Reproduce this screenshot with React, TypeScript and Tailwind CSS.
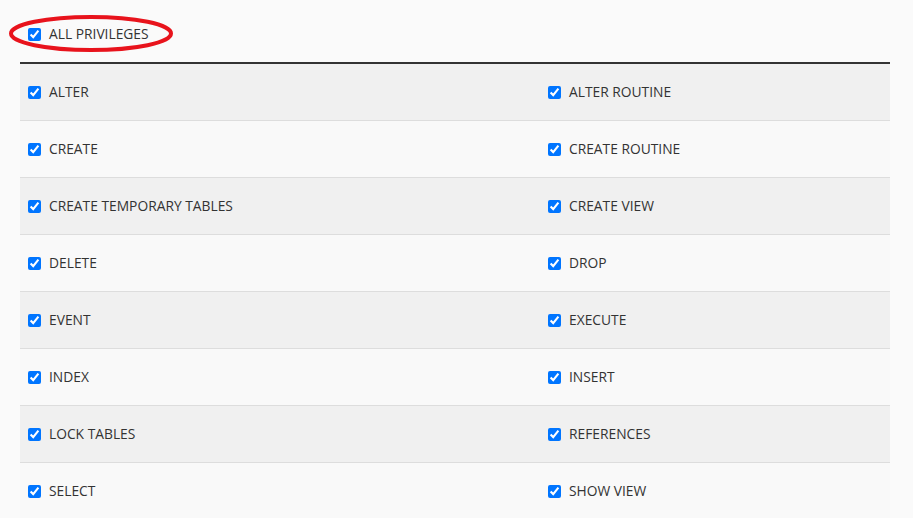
import React from "react";

const rows: [string, string][] = [
  ["ALTER", "ALTER ROUTINE"],
  ["CREATE", "CREATE ROUTINE"],
  ["CREATE TEMPORARY TABLES", "CREATE VIEW"],
  ["DELETE", "DROP"],
  ["EVENT", "EXECUTE"],
  ["INDEX", "INSERT"],
  ["LOCK TABLES", "REFERENCES"],
  ["SELECT", "SHOW VIEW"],
];

const Check = ({ label }: { label: string }) => (
  <label className="flex items-center gap-[8px]">
    <input type="checkbox" checked readOnly className="m-0 h-[13px] w-[13px]" />
    <span>{label}</span>
  </label>
);

export default function App() {
  return (
    <div
      className="min-h-[518px] bg-[#fafafa] pl-5 pr-[23px] text-[13.8px] text-[#333]"
      style={{ fontFamily: '"Open Sans", "Liberation Sans", sans-serif' }}
    >
      <div className="relative flex h-[62px] items-start pl-2 pt-[24px]">
        <Check label="ALL PRIVILEGES" />
        <svg
          className="absolute left-[-11px] top-[15px]"
          width="164"
          height="37"
          viewBox="0 0 164 37"
        >
          <ellipse cx="82" cy="18.5" rx="80" ry="16.5" fill="none" stroke="#e8131c" strokeWidth="4" />
        </svg>
      </div>
      <div className="border-t-2 border-[#333]">
        {rows.map(([a, b], i) => (
          <div
            key={a}
            className={`flex h-[57px] items-center border-b border-[#ddd] ${
              i % 2 === 0 ? "bg-[#f0f0f0]" : "bg-[#f9f9f9]"
            }`}
          >
            <div className="w-[520px] pl-2">
              <Check label={a} />
            </div>
            <div className="flex-1 pl-2">
              <Check label={b} />
            </div>
          </div>
        ))}
      </div>
    </div>
  );
}
